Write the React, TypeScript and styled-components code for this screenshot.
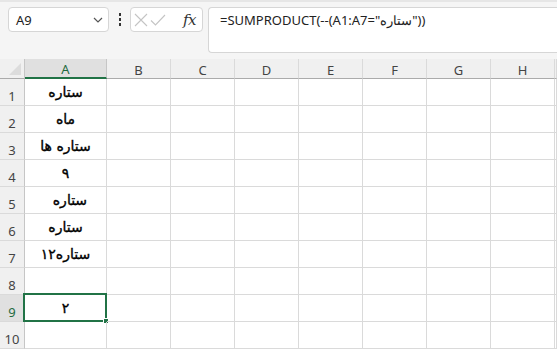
import React from "react";
import styled, { createGlobalStyle } from "styled-components";

const Global = createGlobalStyle`
  html, body { margin: 0; padding: 0; background: #f5f5f5; overflow: hidden; }
  body { font-family: "Noto Sans", "Open Sans", sans-serif; }
`;

const Page = styled.div`
  width: 557px;
  height: 350px;
  display: flex;
  flex-direction: column;
  border-top: 2px solid #e6e6e6;
  box-sizing: border-box;
  background: #f5f5f5;
`;

const FormulaBar = styled.div`
  height: 57px;
  display: flex;
  align-items: flex-start;
  padding: 5px 0 0 8px;
  box-sizing: border-box;
`;

const NameBox = styled.div`
  width: 101px;
  height: 25px;
  box-sizing: border-box;
  border: 1px solid #d6d6d6;
  border-radius: 4px;
  background: #fff;
  display: flex;
  align-items: center;
  justify-content: space-between;
  padding: 0 5px 0 7px;
  font-size: 13px;
  color: #222;
`;

const Dots = styled.div`
  width: 21px;
  height: 25px;
  display: flex;
  flex-direction: column;
  align-items: center;
  justify-content: center;
  gap: 2px;
  & > span {
    width: 2px;
    height: 3px;
    background: #333;
  }
`;

const ButtonBox = styled.div`
  width: 73px;
  height: 25px;
  box-sizing: border-box;
  border: 1px solid #d6d6d6;
  border-radius: 4px;
  background: #fff;
  display: flex;
  align-items: center;
  padding: 0 0 0 2px;
  gap: 0;
`;

const Fx = styled.span`
  font-family: "DejaVu Serif", "Liberation Serif", serif;
  font-style: italic;
  font-size: 15px;
  color: #333;
  margin-left: 16px;
  letter-spacing: -0.5px;
`;

const FormulaInput = styled.div`
  margin-left: 5px;
  flex: 1;
  height: 46px;
  box-sizing: border-box;
  border: 1px solid #d6d6d6;
  border-right: none;
  border-radius: 4px 0 0 4px;
  background: #fff;
  padding: 3px 0 0 11px;
  font-size: 13px;
  color: #222;
  white-space: nowrap;
  direction: ltr;
`;

const Grid = styled.div`
  display: grid;
  grid-template-columns: 25px 82px repeat(7, 64px) 1fr;
  grid-template-rows: 20px repeat(10, 27px);
  background: #fff;
  flex: 1;
`;

const Corner = styled.div`
  background: #f0f0f0;
  border-right: 1px solid #c6c6c6;
  border-bottom: 1px solid #ababab;
  box-sizing: border-box;
  position: relative;
  &::after {
    content: "";
    position: absolute;
    right: 3px;
    bottom: 3px;
    width: 0;
    height: 0;
    border-left: 12px solid transparent;
    border-bottom: 12px solid #dcdcdc;
  }
`;

const ColHead = styled.div<{ $sel?: boolean }>`
  background: ${(p) => (p.$sel ? "#e0e0e0" : "#f0f0f0")};
  border-right: 1px solid ${(p) => (p.$sel ? "#c6c6c6" : "#dadada")};
  border-bottom: ${(p) => (p.$sel ? "2px solid #217346" : "1px solid #ababab")};
  box-sizing: border-box;
  display: flex;
  align-items: center;
  justify-content: center;
  font-size: 13px;
  line-height: 15px;
  color: ${(p) => (p.$sel ? "#1e6b3f" : "#444")};
  padding-top: 3px;
`;

const RowHead = styled.div<{ $sel?: boolean }>`
  background: ${(p) => (p.$sel ? "#e0e0e0" : "#f0f0f0")};
  border-right: 1px solid ${(p) => (p.$sel ? "#217346" : "#c6c6c6")};
  border-bottom: 1px solid #dadada;
  box-sizing: border-box;
  display: flex;
  align-items: flex-end;
  justify-content: center;
  padding-bottom: 2px;
  line-height: 14px;
  font-size: 13px;
  color: ${(p) => (p.$sel ? "#1e6b3f" : "#444")};
`;

const Cell = styled.div`
  border-right: 1px solid #dadada;
  border-bottom: 1px solid #dadada;
  box-sizing: border-box;
  display: flex;
  align-items: center;
  justify-content: center;
  font-family: "DejaVu Sans", sans-serif;
  font-weight: normal;
  font-size: 14px;
  line-height: 20px;
  color: #000;
  -webkit-text-stroke: 0.35px #000;
  white-space: pre;
  position: relative;
  padding-bottom: 1px;
`;

const Selection = styled.div`
  position: absolute;
  left: -2px;
  top: -2px;
  right: -1px;
  bottom: -1px;
  border: 2px solid #217346;
  pointer-events: none;
  &::after {
    content: "";
    position: absolute;
    right: -4px;
    bottom: -4px;
    width: 6px;
    height: 6px;
    background: #217346;
    border: 1px solid #fff;
    box-sizing: border-box;
  }
`;

const cols = ["A", "B", "C", "D", "E", "F", "G", "H"];
const values: Record<number, string> = {
  1: "ستاره",
  2: "ماه",
  3: "ستاره ها",
  4: "۹",
  5: "\u00a0\u00a0ستاره",
  6: "ستاره",
  7: "ستاره۱۲",
  9: "۲",
};

export default function App() {
  return (
    <>
      <Global />
      <Page>
        <FormulaBar>
          <NameBox>
            <span>A9</span>
            <svg width="10" height="6" viewBox="0 0 10 6">
              <path d="M1 1 L5 5 L9 1" fill="none" stroke="#555" strokeWidth="1.2" />
            </svg>
          </NameBox>
          <Dots>
            <span />
            <span />
            <span />
          </Dots>
          <ButtonBox>
            <svg width="16" height="16" viewBox="0 0 16 16">
              <path d="M2 2 L14 14 M14 2 L2 14" stroke="#c4c4c4" strokeWidth="1.1" fill="none" />
            </svg>
            <svg width="18" height="16" viewBox="0 0 18 16">
              <path d="M2 8.5 L6.5 13 L16 3" stroke="#c4c4c4" strokeWidth="1.1" fill="none" />
            </svg>
            <Fx>fx</Fx>
          </ButtonBox>
          <FormulaInput>=SUMPRODUCT(--(A1:A7="ستاره"))</FormulaInput>
        </FormulaBar>
        <Grid>
          <Corner />
          {cols.map((c) => (
            <ColHead key={c} $sel={c === "A"}>
              {c}
            </ColHead>
          ))}
          <ColHead />
          {Array.from({ length: 10 }, (_, i) => i + 1).map((r) => (
            <React.Fragment key={r}>
              <RowHead $sel={r === 9}>{r}</RowHead>
              <Cell>
                {values[r] ?? ""}
                {r === 9 && <Selection />}
              </Cell>
              {cols.slice(1).map((c) => (
                <Cell key={c} />
              ))}
              <Cell />
            </React.Fragment>
          ))}
        </Grid>
      </Page>
    </>
  );
}
